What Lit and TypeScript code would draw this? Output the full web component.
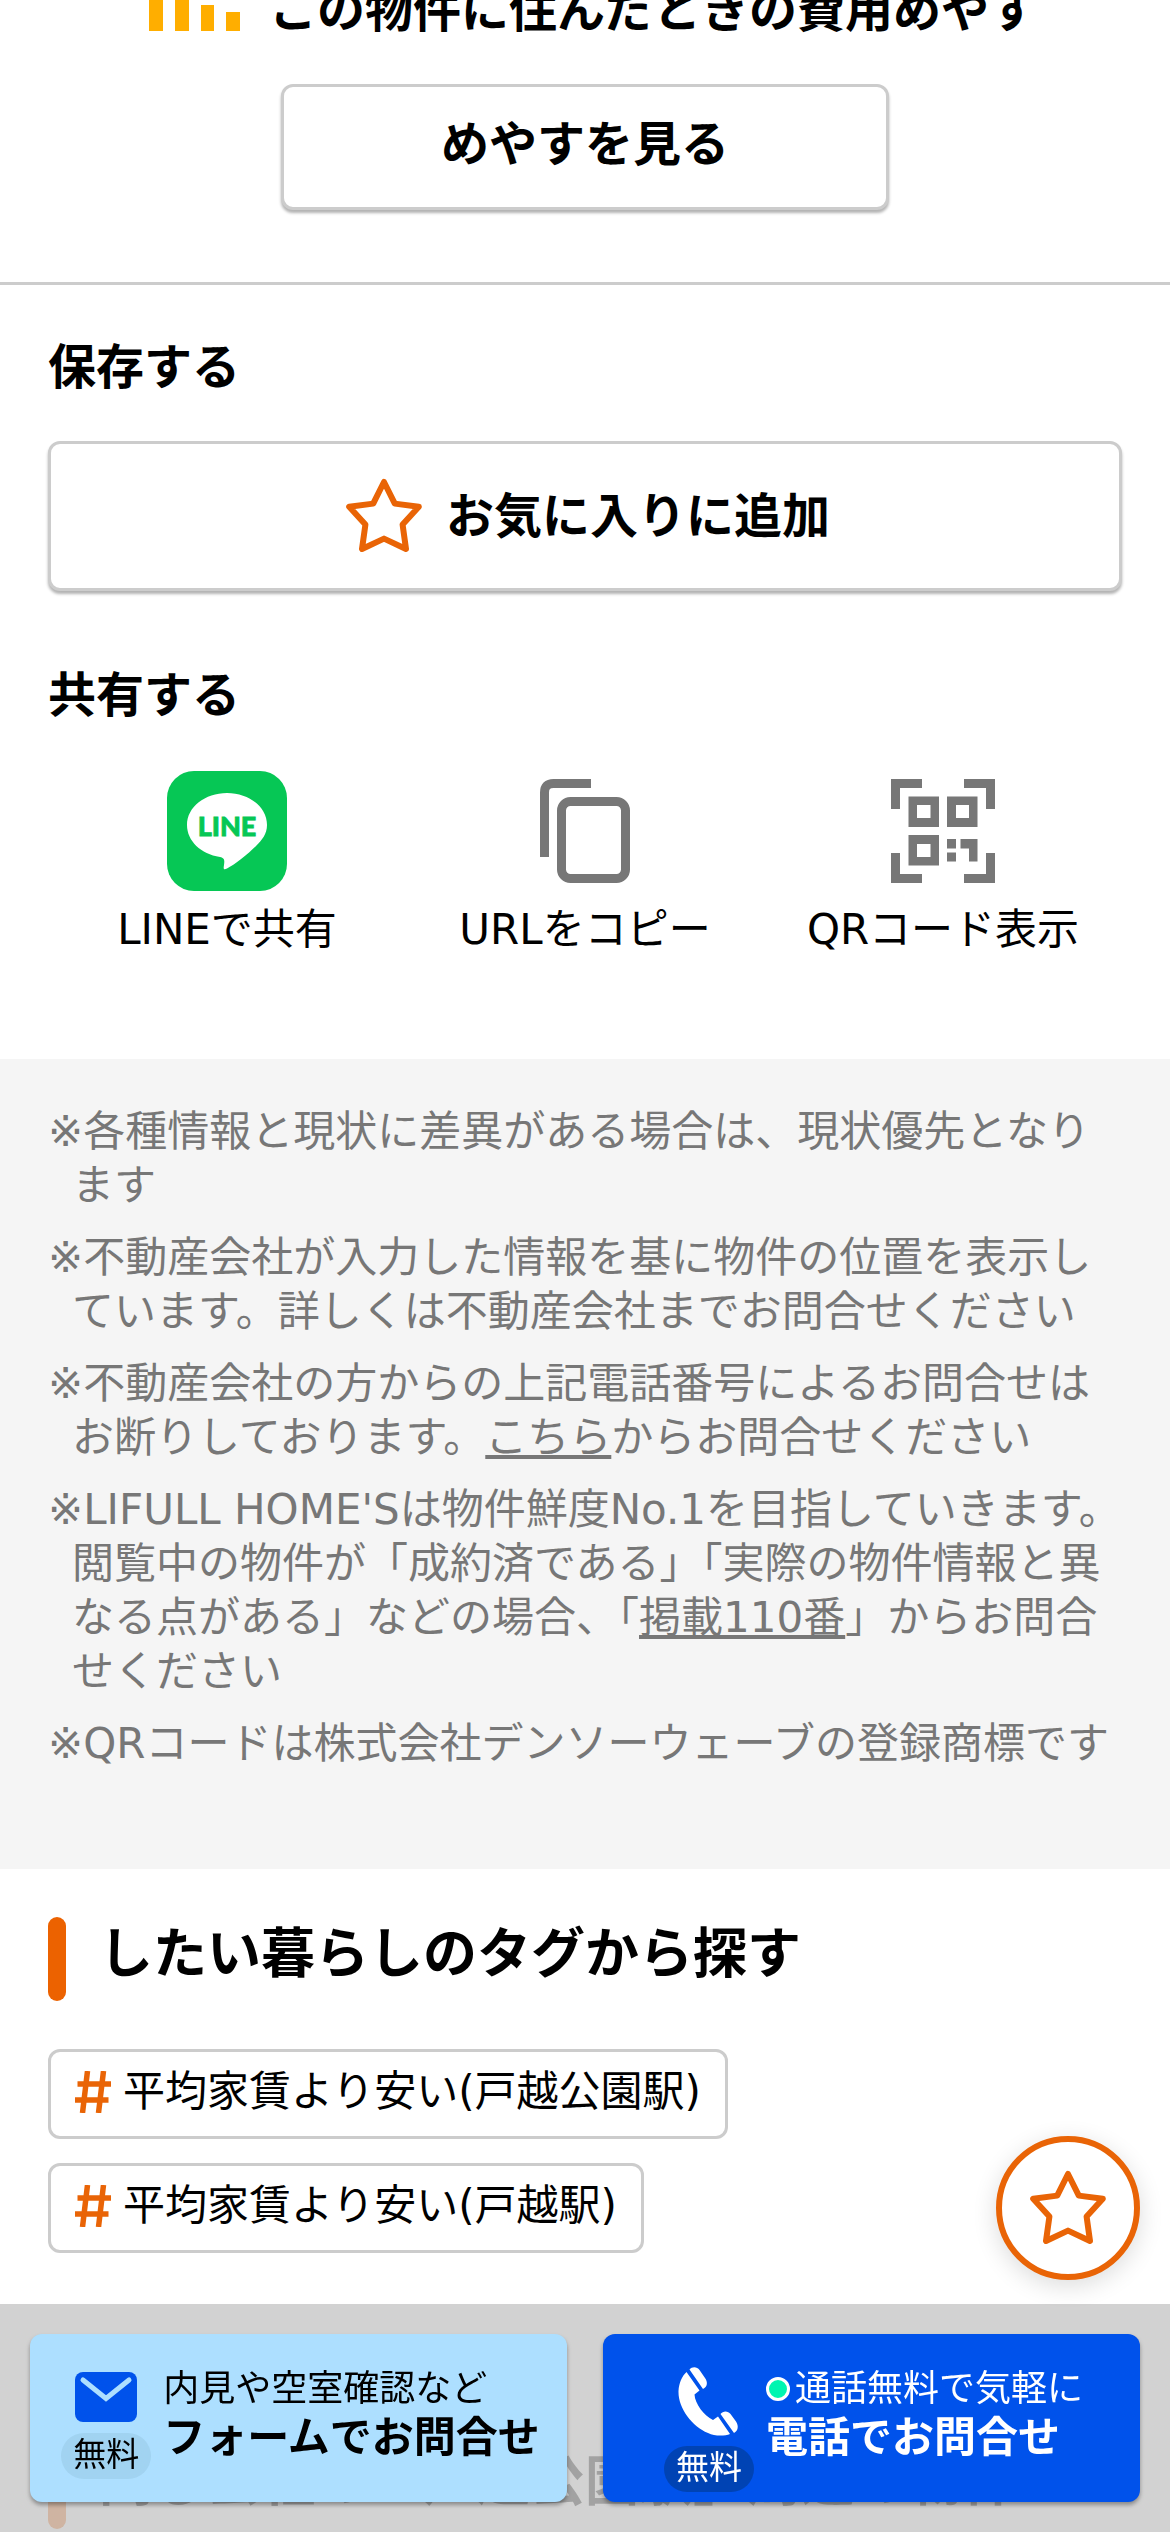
import { LitElement, html, css } from "lit";
import { customElement, property } from "lit/decorators.js";

const starIcon = html`
  <svg class="star" viewBox="0 0 76 76" width="76" height="76" aria-hidden="true">
    <path
      d="M38 4 L48.8 25.6 L72.8 28.8 L56.6 46.6 L60 71 L38 60.6 L16 71 L19.4 46.6 L3.2 28.8 L27.2 25.6 Z"
      fill="none"
      stroke="#e96406"
      stroke-width="6"
      stroke-linejoin="round"
    />
  </svg>
`;

const lineIcon = html`
  <svg viewBox="0 0 120 120" width="120" height="120" aria-hidden="true">
    <rect width="120" height="120" rx="27" fill="#06c755" />
    <path
      d="M60 22 C82 22 100 36 100 54 C100 63 95 69 89 75 C81 83 67 94 60 97.500 C56 99.500 56.500 97 57 94 C57.500 90 58 87 53 86 C34 83 20 70 20 54 C20 36 38 22 60 22 Z"
      fill="#fff"
    />
    <text
      x="60"
      y="65"
      text-anchor="middle"
      font-family="Lato, sans-serif"
      font-weight="900"
      font-size="27"
      fill="#06c755"
      stroke="#06c755"
      stroke-width="0.8"
    >LINE</text>
  </svg>
`;

const copyIcon = html`
  <svg viewBox="0 0 120 120" width="120" height="120" fill="none" stroke="#777" stroke-width="9" aria-hidden="true">
    <path d="M19.500 86 V21.500 Q19.500 12.500 28.500 12.500 H66" />
    <rect x="36.500" y="30.500" width="64" height="77" rx="9" />
  </svg>
`;

const qrIcon = html`
  <svg viewBox="0 0 120 120" width="120" height="120" fill="#777" aria-hidden="true">
    <path d="M8 8 H39 V17 H17 V38 H8 Z M112 8 H81 V17 H103 V38 H112 Z M8 112 H39 V103 H17 V82 H8 Z M112 112 H81 V103 H103 V82 H112 Z" />
    <path
      fill-rule="evenodd"
      d="M25.500 25.500 H56 V56 H25.500 Z M34 34 V47 H47.500 V34 Z M64 25.500 H94.500 V56 H64 Z M73 34 V47 H86 V34 Z M25.500 64 H56 V94.500 H25.500 Z M34 73 V86 H47.500 V73 Z"
    />
    <path d="M64 68 H73 V77.500 H64 Z M64 81.500 H73 V90.500 H64 Z M77.500 68 H94.500 V90.500 H86 V77.500 H77.500 Z" />
  </svg>
`;

const hashIcon = html`
  <svg viewBox="0 0 36 42" width="36" height="42" fill="none" stroke="#e96406" stroke-width="5.500" aria-hidden="true">
    <path d="M12.500 0 L7.500 42 M28.500 0 L23.500 42 M2.500 13 H36 M0 29 H33.500" />
  </svg>
`;

const mailIcon = html`
  <svg viewBox="0 0 62 57" width="62" height="57" aria-hidden="true">
    <rect y="6" width="62" height="50" rx="8" fill="#0052eb" />
    <path d="M8 14 L31 32.500 L54 14" fill="none" stroke="#addfff" stroke-width="5" stroke-linecap="round" />
  </svg>
`;

const phoneIcon = html`
  <svg viewBox="0 0 62 70" width="62" height="70" fill="#fff" aria-hidden="true">
    <path
      d="M8.500 6 L21.500 24.500 L16.500 28.500 C17 38 26 49.500 35 54 L40 50.500 L52 68 C47 70 37 70.500 30 67 C14 60 0 42 0.500 25 C1 17 4 10 8.500 6 Z"
    />
    <path d="M11.500 3.500 C14 0.500 19 0.500 21.500 4 L27 12 C30 16 29.500 21 25 23 Z" />
    <path d="M42.500 48 C45 44.500 50 44.500 52.500 48 L58 55.500 C61 60 60 65 56 67 Z" />
  </svg>
`;

@customElement("section-heading")
export class SectionHeading extends LitElement {
  static styles = css`
    :host {
      display: block;
    }
    .heading {
      display: flex;
      gap: 33px;
      min-height: 84px;
      margin: 0;
      font-size: 54px;
      line-height: 75px;
      font-weight: 700;
    }
    .heading::before {
      content: "";
      flex: 0 0 18px;
      border-radius: 9px;
      background: #ec6200;
    }
  `;

  render() {
    return html`<h2 class="heading"><slot></slot></h2>`;
  }
}

@customElement("tag-link")
export class TagLink extends LitElement {
  @property() label = "";

  static styles = css`
    :host {
      display: block;
    }
    .tag {
      display: inline-flex;
      align-items: center;
      gap: 12px;
      padding: 13px 24px 17px;
      border: 3px solid #ccc;
      border-radius: 12px;
      background: #fff;
      color: #000;
      font-size: 42px;
      line-height: 54px;
      text-decoration: none;
    }
  `;

  render() {
    return html`<a class="tag" href="#">${hashIcon}<span>${this.label}</span></a>`;
  }
}

@customElement("app-root")
export class AppRoot extends LitElement {
  static styles = css`
    :host {
      display: block;
      min-height: 100vh;
      background: #fff;
      color: #000;
      font-family: "DejaVu Sans", "Noto Sans CJK JP", sans-serif;
      font-size: 42px;
      line-height: 54px;
    }
    * {
      box-sizing: border-box;
    }
    button {
      font: inherit;
      color: inherit;
      cursor: pointer;
    }
    svg {
      display: block;
      flex: none;
    }
    .cost {
      display: flex;
      flex-direction: column;
      align-items: center;
      padding-bottom: 72px;
      border-bottom: 3px solid #ccc;
    }
    .cost-title {
      display: flex;
      align-items: flex-end;
      justify-content: center;
      gap: 12px;
      height: 42px;
      margin: 0 0 42px;
      overflow: hidden;
      font-size: 48px;
      line-height: 63px;
      font-weight: 700;
    }
    .outline {
      display: flex;
      align-items: center;
      justify-content: center;
      padding: 0;
      border: 3px solid #ccc;
      border-radius: 12px;
      background: #fff;
      box-shadow: 0 3px 3px rgba(0, 0, 0, 0.3);
      font-size: 48px;
      line-height: 63px;
      font-weight: 700;
    }
    .see-cost {
      width: 52%;
      min-height: 126px;
      padding-bottom: 6px;
    }
    .actions {
      padding: 51px 48px 102px;
    }
    .subtitle {
      margin: 0 0 42px;
      font-size: 48px;
      line-height: 63px;
      font-weight: 700;
    }
    .favorite {
      width: 100%;
      min-height: 150px;
      margin-bottom: 73px;
      padding-left: 6px;
      gap: 24px;
    }
    .share {
      display: grid;
      grid-template-columns: repeat(3, 1fr);
      margin: 0;
      padding: 0;
      list-style: none;
    }
    .share-button {
      display: flex;
      flex-direction: column;
      align-items: center;
      gap: 12px;
      width: 100%;
      padding: 2px 0 0;
      border: 0;
      background: none;
      white-space: nowrap;
    }
    .notes {
      display: flex;
      flex-direction: column;
      gap: 18px;
      margin: 0;
      padding: 46px 48px 98px;
      background: #f5f5f5;
      color: #777;
      list-style: none;
    }
    .note {
      padding-left: 24px;
      text-indent: -24px;
    }
    .note a {
      color: inherit;
      text-decoration: underline;
    }
    .tags {
      padding: 48px 48px 144px;
    }
    .tag-list {
      display: flex;
      flex-direction: column;
      gap: 24px;
      margin-top: 48px;
    }
    .nearby {
      padding: 48px 48px 0;
    }
    .dock {
      position: fixed;
      right: 0;
      bottom: 0;
      left: 0;
    }
    .fab {
      position: absolute;
      right: 30px;
      bottom: 252px;
      display: flex;
      align-items: center;
      justify-content: center;
      width: 144px;
      height: 144px;
      padding: 0;
      border: 6px solid #e96406;
      border-radius: 50%;
      background: #fff;
      box-shadow: 0 6px 24px rgba(0, 0, 0, 0.14);
    }
    .bar {
      display: grid;
      grid-template-columns: 1fr 1fr;
      gap: 36px;
      padding: 30px;
      background: rgba(200, 200, 200, 0.81);
    }
    .contact {
      display: flex;
      justify-content: center;
      gap: 12px;
      min-height: 168px;
      padding: 32px 0 0 4px;
      border-radius: 12px;
      box-shadow: 0 3px 4px rgba(0, 0, 0, 0.35);
      text-decoration: none;
      white-space: nowrap;
    }
    .mail {
      background: #addfff;
      color: #000;
    }
    .phone {
      background: #0052eb;
      color: #fff;
    }
    .kind {
      display: flex;
      flex-direction: column;
      align-items: center;
      gap: 10px;
      width: 90px;
    }
    .free {
      width: 90px;
      padding-bottom: 3px;
      border-radius: 24px;
      text-align: center;
      font-size: 33px;
      line-height: 43px;
    }
    .mail .free {
      background: #a1d3f1;
    }
    .phone .free {
      background: #0043b4;
    }
    .lead {
      display: flex;
      align-items: center;
      gap: 5px;
      font-size: 36px;
      line-height: 45px;
    }
    .main {
      display: block;
      font-weight: 700;
    }
    .dot {
      width: 24px;
      height: 24px;
      border: 3px solid #fff;
      border-radius: 50%;
      background: #00f5b0;
    }
  `;

  private tags = ["平均家賃より安い(戸越公園駅)", "平均家賃より安い(戸越駅)"];

  render() {
    return html`
      <main>
        <section class="cost">
          <h2 class="cost-title">
            <svg viewBox="3 0 124 60" width="124" height="60" fill="#ffae00" aria-hidden="true">
              <path d="M19 0 H33 V49 H19 Z M45 10 H59 V49 H45 Z M71 23 H84 V49 H71 Z M96 30 H110 V49 H96 Z" />
            </svg>
            <span>この物件に住んだときの費用めやす</span>
          </h2>
          <button class="outline see-cost" type="button">めやすを見る</button>
        </section>

        <section class="actions">
          <h3 class="subtitle">保存する</h3>
          <button class="outline favorite" type="button">${starIcon}<span>お気に入りに追加</span></button>
          <h3 class="subtitle">共有する</h3>
          <ul class="share">
            <li><button class="share-button" type="button">${lineIcon}<span>LINEで共有</span></button></li>
            <li><button class="share-button" type="button">${copyIcon}<span>URLをコピー</span></button></li>
            <li><button class="share-button" type="button">${qrIcon}<span>QRコード表示</span></button></li>
          </ul>
        </section>

        <ul class="notes">
          <li class="note">※各種情報と現状に差異がある場合は、現状優先となります</li>
          <li class="note">※不動産会社が入力した情報を基に物件の位置を表示しています。詳しくは不動産会社までお問合せください</li>
          <li class="note">※不動産会社の方からの上記電話番号によるお問合せはお断りしております。<a href="#">こちら</a>からお問合せください</li>
          <li class="note">※LIFULL HOME'Sは物件鮮度No.1を目指していきます。閲覧中の物件が「成約済である」「実際の物件情報と異なる点がある」などの場合、「<a href="#">掲載110番</a>」からお問合せください</li>
          <li class="note">※QRコードは株式会社デンソーウェーブの登録商標です</li>
        </ul>

        <section class="tags">
          <section-heading>したい暮らしのタグから探す</section-heading>
          <div class="tag-list">
            ${this.tags.map((label) => html`<tag-link .label=${label}></tag-link>`)}
          </div>
        </section>

        <section class="nearby">
          <section-heading>同じ会社の「戸越公園駅」周辺の物件</section-heading>
        </section>
      </main>

      <div class="dock">
        <button class="fab" type="button" aria-label="お気に入りに追加">${starIcon}</button>
        <nav class="bar">
          <a class="contact mail" href="#">
            <span class="kind">${mailIcon}<span class="free">無料</span></span>
            <span>
              <span class="lead">内見や空室確認など</span>
              <span class="main">フォームでお問合せ</span>
            </span>
          </a>
          <a class="contact phone" href="#">
            <span class="kind">${phoneIcon}<span class="free">無料</span></span>
            <span>
              <span class="lead"><span class="dot"></span>通話無料で気軽に</span>
              <span class="main">電話でお問合せ</span>
            </span>
          </a>
        </nav>
      </div>
    `;
  }
}
